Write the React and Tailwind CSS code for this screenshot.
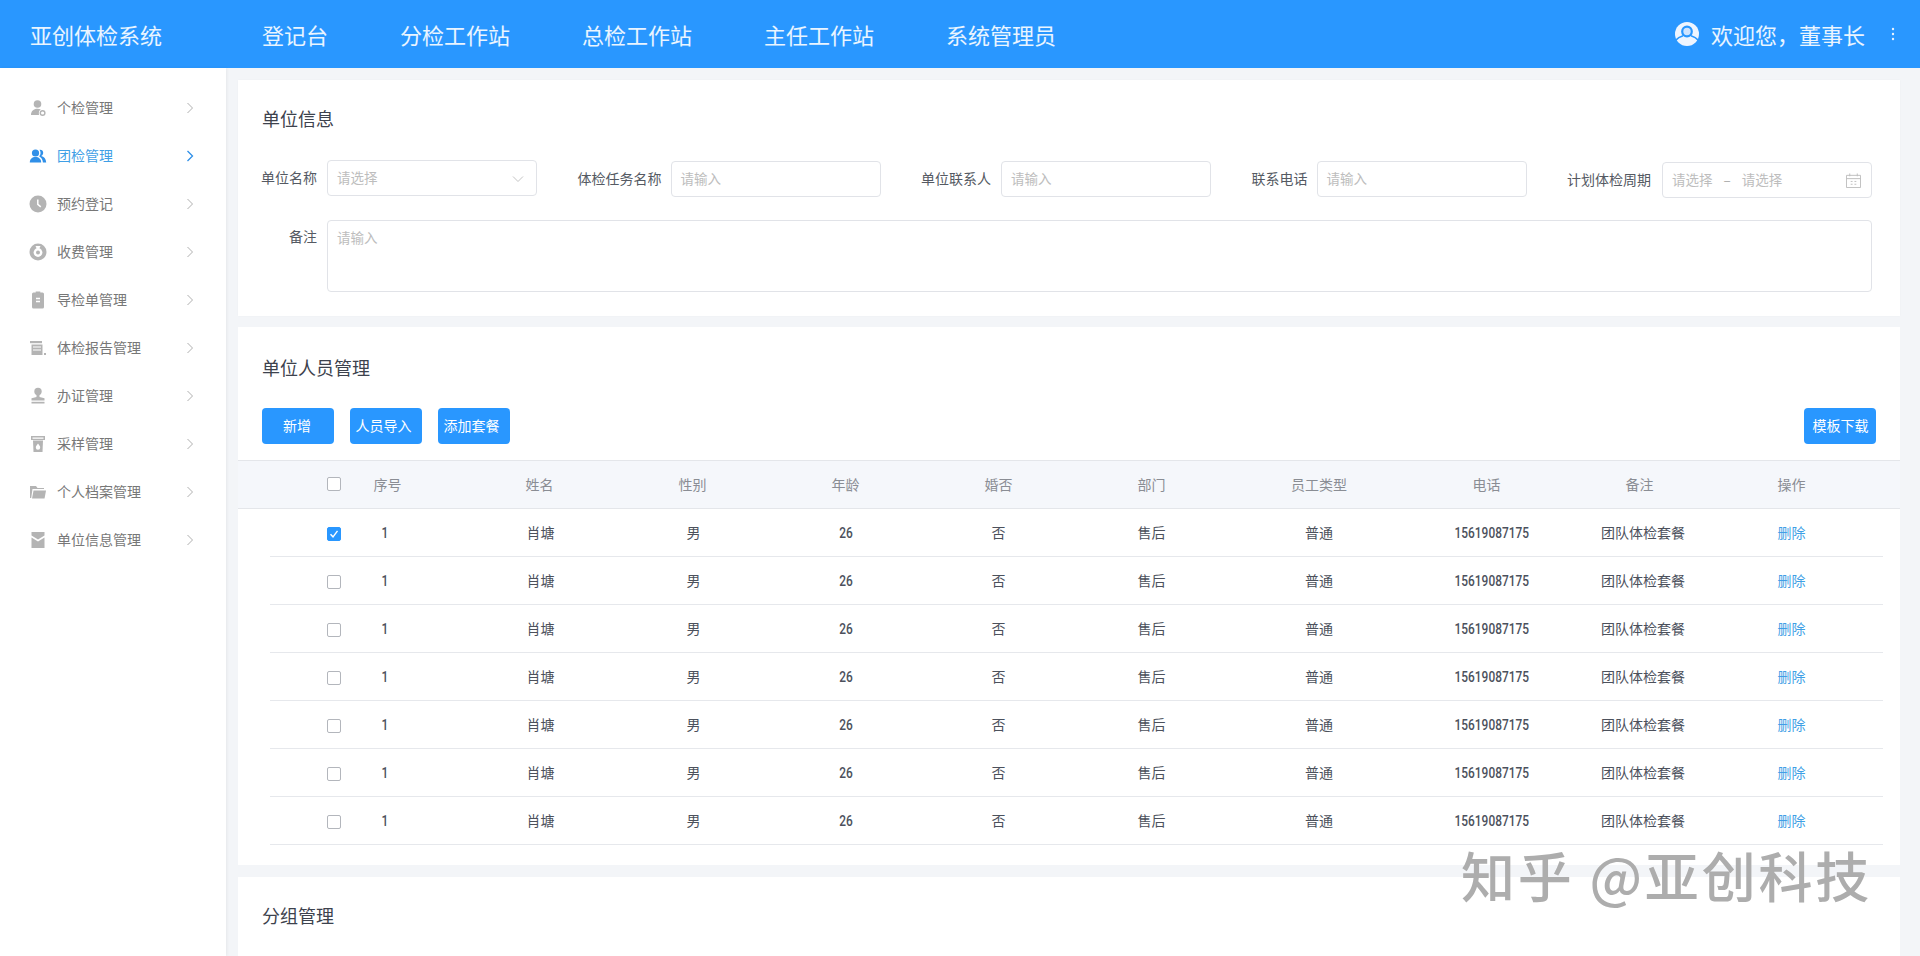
import React from "react";

const NAV = ["登记台", "分检工作站", "总检工作站", "主任工作站", "系统管理员"];

const G = "#b4b4b4";
const icons = {
  person: (c) => (
    <svg width="18" height="18" viewBox="0 0 18 18" fill={c}>
      <circle cx="8.500" cy="5" r="3.800" />
      <path d="M2 16c0-3.800 2.600-6.200 6.500-6.200 1.300 0 2.400.3 3.300.7-1.500.6-2.400 2.500-1.800 5.500z" />
      <circle cx="13.600" cy="14" r="2.300" fill="none" stroke={c} strokeWidth="1.400" />
    </svg>
  ),
  group: (c) => (
    <svg width="18" height="18" viewBox="0 0 18 18" fill={c}>
      <circle cx="6.500" cy="6" r="3.600" />
      <path d="M.8 15.500c0-3.400 2.400-5.400 5.700-5.400s5.700 2 5.700 5.400z" />
      <path d="M10.500 2.700c2-.4 3.700.9 3.700 3 0 1.500-.8 2.700-2 3.200 2.800.5 4.800 2.700 5 6.600h-3.300c-.2-2.800-1.400-5-3.800-6.300 1.800-1.500 2-4.500.4-6.500z" />
    </svg>
  ),
  clock: (c) => (
    <svg width="18" height="18" viewBox="0 0 18 18">
      <circle cx="9" cy="9" r="8.500" fill={c} />
      <path d="M8.800 4.500v4.800l3 2.500" fill="none" stroke="#fff" strokeWidth="1.500" />
    </svg>
  ),
  money: (c) => (
    <svg width="18" height="18" viewBox="0 0 18 18">
      <circle cx="9" cy="9" r="8.500" fill={c} />
      <circle cx="9" cy="9.500" r="4.400" fill="#fff" />
      <circle cx="9" cy="9.500" r="2" fill={c} />
      <path d="M6.500 3h5l-1.200 2.400H7.700z" fill="#fff" />
    </svg>
  ),
  clip: (c) => (
    <svg width="18" height="18" viewBox="0 0 18 18" fill={c}>
      <path d="M4.500 1.500h2.200V.5h4.600v1h2.200a1.500 1.500 0 0 1 1.500 1.500v13a1.500 1.500 0 0 1-1.500 1.500h-9A1.500 1.500 0 0 1 3 16V3a1.500 1.500 0 0 1 1.500-1.500z" />
      <path d="M7 7.500h4M7 10.500h4" stroke="#fff" strokeWidth="1.300" />
    </svg>
  ),
  report: (c) => (
    <svg width="18" height="18" viewBox="0 0 18 18" fill={c}>
      <rect x="1" y="2" width="12" height="2.200" />
      <path d="M2.500 5.500H13.500V16H2.500z" />
      <path d="M4 8h8M4 11h8" stroke="#fff" strokeWidth="1.200" />
      <rect x="15" y="14" width="2" height="2" />
    </svg>
  ),
  stamp: (c) => (
    <svg width="18" height="18" viewBox="0 0 18 18" fill={c}>
      <circle cx="9" cy="4.500" r="3.700" />
      <path d="M7.500 7.500h3v2.500l5 1.300V13.500H2.500v-2.200L7.500 10z" />
      <rect x="2.500" y="14.800" width="13" height="1.700" />
    </svg>
  ),
  cup: (c) => (
    <svg width="18" height="18" viewBox="0 0 18 18" fill={c}>
      <path d="M2 1h14v4H2zM3.500 2.400v1.300h11V2.400z" fillRule="evenodd" />
      <path d="M4 5.500h10L13.500 17h-9z" />
      <path d="M9 8.500c1.300 1.700 2.200 2.800 2.200 4a2.200 2.200 0 0 1-4.400 0c0-1.200.900-2.300 2.200-4z" fill="#fff" />
    </svg>
  ),
  folder: (c) => (
    <svg width="18" height="18" viewBox="0 0 18 18" fill={c}>
      <path d="M1 3h6l1.500 2H15v1H3.500L2.200 15H1z" />
      <path d="M4.500 7.500H17l-1.500 8H3z" />
    </svg>
  ),
  mail: (c) => (
    <svg width="18" height="18" viewBox="0 0 18 18" fill={c}>
      <path d="M2.500 1h13v3.500L9 8.500 2.500 4.500z" />
      <path d="M2.500 6.500 9 10.500l6.500-4V17h-13z" />
    </svg>
  ),
};

const SIDE = [
  ["person", "个检管理"],
  ["group", "团检管理"],
  ["clock", "预约登记"],
  ["money", "收费管理"],
  ["clip", "导检单管理"],
  ["report", "体检报告管理"],
  ["stamp", "办证管理"],
  ["cup", "采样管理"],
  ["folder", "个人档案管理"],
  ["mail", "单位信息管理"],
];

const HEAD = [
  ["序号", "pl-[2px]"],
  ["姓名", ""],
  ["性别", ""],
  ["年龄", ""],
  ["婚否", ""],
  ["部门", ""],
  ["员工类型", ""],
  ["电话", ""],
  ["备注", ""],
  ["操作", "pr-[2px]"],
];
const GRID = "grid grid-cols-[40px_repeat(6,153px)_182px_repeat(3,153px)] items-center";

function Chevron({ color = "#a8a8a8", w = 1 }) {
  return (
    <svg width="8" height="12" viewBox="0 0 8 12" fill="none" stroke={color} strokeWidth={w}>
      <path d="M1.500 1 6.500 6l-5 5" />
    </svg>
  );
}

function Check({ checked, className = "" }) {
  return (
    <span
      className={
        "ml-[57px] flex h-[14px] w-[14px] shrink-0 items-center justify-center rounded-[2px] border " +
        (checked ? "border-[#2997ff] bg-[#2997ff] " : "border-[#b3b6bc] bg-white ") +
        className
      }
    >
      {checked && (
        <svg width="10" height="10" viewBox="0 0 10 10" fill="none" stroke="#fff" strokeWidth="1.400">
          <path d="M1.500 5.200 4 7.800 8.500 1.800" />
        </svg>
      )}
    </span>
  );
}

function Num({ children, className = "" }) {
  return (
    <span className={"pt-[2px] " + className}>
      <span className='inline-block scale-x-[0.85] font-["Roboto",sans-serif] font-medium'>{children}</span>
    </span>
  );
}

function Row({ checked }) {
  return (
    <div className={GRID + " ml-8 mr-[17px] h-12 border-b border-[#e6e8ec] pb-[2px] text-center text-sm text-[#4c515c]"}>
      <Check checked={checked} className="mt-[4px]" />
      <Num className="pr-[4px]">1</Num>
      <span className="pl-[2px]">肖塘</span>
      <span className="pl-[2px]">男</span>
      <Num>26</Num>
      <span>否</span>
      <span>售后</span>
      <span>普通</span>
      <Num className="pl-[10px]">15619087175</Num>
      <span className="pl-[7px]">团队体检套餐</span>
      <span className="pr-[2px] text-[#3f9fe6]">删除</span>
    </div>
  );
}

function Label({ children }) {
  return <span className="shrink-0 text-sm leading-[34px] text-[#555a63]">{children}</span>;
}

function Input({ className = "", children, text = "请输入" }) {
  return (
    <div className={"flex h-9 items-center rounded border border-[#e1e3e8] pb-[2px] pl-[9px] pr-[10px] text-[13.5px] text-[#bdbdbd] " + className}>
      {text}
      {children}
    </div>
  );
}

function Btn({ children, className = "" }) {
  return (
    <button className={"h-9 w-[72px] rounded bg-[#2997ff] pb-[2px] text-sm text-white " + className}>{children}</button>
  );
}

export default function App() {
  return (
    <div className='flex h-screen flex-col overflow-hidden bg-[#f3f5f8] font-["Noto_Sans_CJK_SC",sans-serif]'>
      <header className="flex h-[68px] shrink-0 items-center bg-[#2997ff] pl-[30px] pr-[25px] text-[22px] text-white/90">
        <div className="w-[232px]">亚创体检系统</div>
        <nav className="flex gap-[72px]">
          {NAV.map((n) => (
            <span key={n}>{n}</span>
          ))}
        </nav>
        <div className="ml-auto flex items-center">
          <svg width="24" height="24" viewBox="0 0 24 24">
            <circle cx="12" cy="12" r="12" fill="#eef5ff" />
            <circle cx="12" cy="9.500" r="4.800" fill="#cfe4ff" stroke="#2997ff" strokeWidth="2.200" />
            <path d="M.5 18.500C3 15.500 5.500 14.500 8 13.800M23.500 18.500C21 15.500 18.500 14.500 16 13.800" fill="none" stroke="#2997ff" strokeWidth="1.600" />
          </svg>
          <span className="ml-[12px]">欢迎您，董事长</span>
          <svg className="ml-[26px]" width="4" height="14" viewBox="0 0 4 14" fill="#e8f2ff">
            <circle cx="2" cy="2" r="1.200" />
            <circle cx="2" cy="7" r="1.200" />
            <circle cx="2" cy="12" r="1.200" />
          </svg>
        </div>
      </header>

      <div className="flex min-h-0 flex-1">
        <aside className="w-[226px] shrink-0 bg-white pt-4 shadow-[1px_0_3px_rgba(0,0,0,0.06)]">
          {SIDE.map(([ic, t], i) => {
            const active = i === 1;
            return (
              <div
                key={t}
                className={"flex h-12 items-center pl-[29px] text-sm " + (active ? "text-[#3f9fe6]" : "text-[#777]")}
              >
                <span className="flex w-[28px] shrink-0">{icons[ic](active ? "#2f8fe8" : G)}</span>
                <span className="w-[129px] shrink-0 pb-[2px]">{t}</span>
                <Chevron color={active ? "#2f8fe8" : "#b0b0b0"} w={active ? 1.300 : 1} />
              </div>
            );
          })}
        </aside>

        <main className="ml-3 mr-5 min-w-0 flex-1 pt-3">
          <section className="h-[236px] bg-white pl-6 pr-7 pt-[23px] shadow-[0_0_2px_rgba(0,0,0,0.03)]">
            <h2 className="text-lg leading-[30px] text-[#3d424d]">单位信息</h2>
            <div className="-ml-px mt-[27px] flex justify-between">
              <div className="flex gap-[10px]">
                <Label>单位名称</Label>
                <Input className="w-[210px] justify-between" text="请选择">
                  <svg width="12" height="8" viewBox="0 0 12 8" fill="none" stroke="#c4c4c4" className="mr-[2px] mt-[4px]">
                    <path d="M1 1.500 6 6.500 11 1.500" />
                  </svg>
                </Input>
              </div>
              <div className="mt-[1px] flex gap-[9px]">
                <Label>体检任务名称</Label>
                <Input className="w-[210px]" />
              </div>
              <div className="mt-[1px] flex gap-[10px]">
                <Label>单位联系人</Label>
                <Input className="w-[210px]" />
              </div>
              <div className="mt-[1px] flex gap-[9px]">
                <Label>联系电话</Label>
                <Input className="w-[210px]" />
              </div>
              <div className="mt-[2px] flex gap-[11px]">
                <Label>计划体检周期</Label>
                <Input className="w-[210px] pr-[9px]" text="请选择">
                  <span className="mx-[11px] text-[#aaa]">–</span>
                  请选择
                  <svg width="15" height="15" viewBox="0 0 16 16" fill="none" stroke="#bdbdbd" className="ml-auto mt-[2px]">
                    <path d="M.5 2.500h15v13H.5zM.5 6h15M4 .5v3M12 .5v3M5 9h2M9 9h2M5 12h2M9 12h2" />
                  </svg>
                </Input>
              </div>
            </div>
            <div className="-ml-px mt-[22px] flex gap-[10px]">
              <span className="w-[56px] shrink-0 text-right text-sm leading-[32px] text-[#555a63]">备注</span>
              <Input className="h-[72px] flex-1 items-start pt-[2px] leading-7">{null}</Input>
            </div>
          </section>

          <section className="mt-[11px] h-[538px] bg-white pt-[25px]">
            <h2 className="pl-6 text-lg leading-[30px] text-[#3d424d]">单位人员管理</h2>
            <div className="mt-[26px] flex justify-between pl-6 pr-6">
              <div className="flex gap-4">
                <Btn className="pr-[2px]">新增</Btn>
                <Btn className="pr-[5px]">人员导入</Btn>
                <Btn className="pr-[5px]">添加套餐</Btn>
              </div>
              <Btn className="pl-[1px]">模板下载</Btn>
            </div>
            <div className={GRID + " mt-[16px] h-[49px] border-y border-[#e4e6ea] bg-[#f5f7fb] pb-[2px] pl-8 text-center text-sm text-[#8a8d94]"}>
              <Check />
              {HEAD.map(([h, c]) => (
                <span key={h} className={c}>{h}</span>
              ))}
            </div>
            {Array.from({ length: 7 }).map((_, i) => (
              <Row key={i} checked={i === 0} />
            ))}
          </section>

          <section className="mt-3 h-[200px] bg-white pl-6 pt-[23px]">
            <h2 className="text-lg leading-[30px] text-[#3d424d]">分组管理</h2>
          </section>
        </main>
      </div>

      <div className="pointer-events-none absolute left-[1461px] top-[837px] whitespace-nowrap text-[54px] font-medium leading-[76px] tracking-[2.800px] text-[#adadad]">
        知乎 @亚创科技
      </div>
    </div>
  );
}
